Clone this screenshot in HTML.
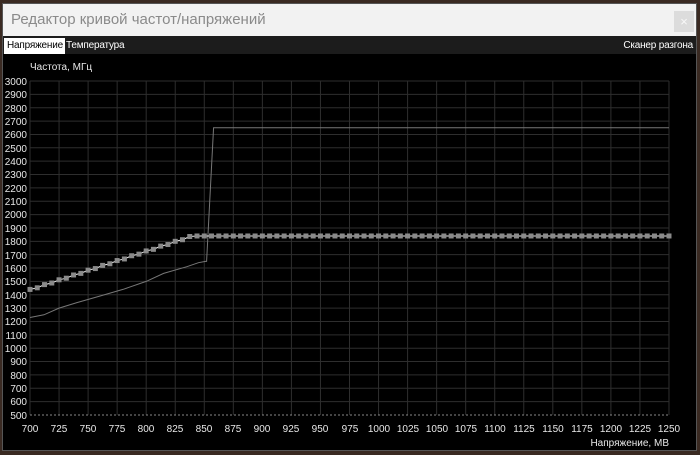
<!DOCTYPE html><html><head><meta charset="utf-8"><style>
body{margin:0;width:700px;height:455px;overflow:hidden;background:#3a2a22;font-family:"Liberation Sans",Arial,sans-serif;position:relative}
#win{position:absolute;left:2px;top:3px;width:695px;height:448px;background:#000;border:1px solid #555;box-sizing:border-box}
#tb{position:absolute;left:0;top:0;width:100%;height:32px;background:#f2f2f2}
#tt{position:absolute;left:8px;top:7px;font-size:15px;color:#8a8a8a}
#cl{position:absolute;right:2px;top:7px;width:20px;height:21px;background:#dcdcdc;color:#f8f8f8;font-size:13px;text-align:center;line-height:21px}
#tabs{position:absolute;left:0;top:32px;width:100%;height:18px;background:#1c1c1c;font-size:10px;color:#fff}
.tab{position:absolute;top:2px;height:16px;line-height:16px;letter-spacing:-0.2px}
svg{position:absolute;left:0;top:0}
svg text{font-family:"Liberation Sans",Arial,sans-serif;font-size:10px;fill:#e8e8e8}
</style></head><body>
<div id="win">
<div id="tb"><div id="tt">Редактор кривой частот/напряжений</div><div id="cl">×</div></div>
<div id="tabs"><div class="tab" style="left:1px;background:#fff;color:#000;padding:0 2px 0 3px">Напряжение</div><div class="tab" style="left:63px">Температура</div><div class="tab" style="right:3px">Сканер разгона</div></div>
</div>
<svg width="700" height="455" id="s">
<text x="30" y="70">Частота, МГц</text>
<g text-anchor="end">
<text x="27" y="85">3000</text><text x="27" y="98">2900</text><text x="27" y="112">2800</text><text x="27" y="125">2700</text><text x="27" y="138">2600</text><text x="27" y="152">2500</text><text x="27" y="165">2400</text><text x="27" y="178">2300</text><text x="27" y="192">2200</text><text x="27" y="205">2100</text><text x="27" y="218">2000</text><text x="27" y="232">1900</text><text x="27" y="245">1800</text><text x="27" y="259">1700</text><text x="27" y="272">1600</text><text x="27" y="285">1500</text><text x="27" y="299">1400</text><text x="27" y="312">1300</text><text x="27" y="325">1200</text><text x="27" y="339">1100</text><text x="27" y="352">1000</text><text x="27" y="365">900</text><text x="27" y="379">800</text><text x="27" y="392">700</text><text x="27" y="405">600</text><text x="27" y="419">500</text>
</g>
<g text-anchor="middle">
<text x="30" y="432">700</text><text x="59" y="432">725</text><text x="88" y="432">750</text><text x="117" y="432">775</text><text x="146" y="432">800</text><text x="175" y="432">825</text><text x="204" y="432">850</text><text x="233" y="432">875</text><text x="262" y="432">900</text><text x="291" y="432">925</text><text x="320" y="432">950</text><text x="350" y="432">975</text><text x="379" y="432">1000</text><text x="408" y="432">1025</text><text x="437" y="432">1050</text><text x="466" y="432">1075</text><text x="495" y="432">1100</text><text x="524" y="432">1125</text><text x="553" y="432">1150</text><text x="582" y="432">1175</text><text x="611" y="432">1200</text><text x="640" y="432">1225</text><text x="669" y="432">1250</text>
</g>
<text x="669" y="446" text-anchor="end">Напряжение, МВ</text>
<g id="g"></g>
</svg>
<script>
var g=document.getElementById('g'),h='';
function X(v){return 30+(v-700)*1.1618}function Y(f){return 81+(3000-f)*0.1336}
for(var f=600;f<=3000;f+=100){h+='<line x1="30" x2="669" y1="'+Y(f)+'" y2="'+Y(f)+'" stroke="#2e2e2e"/>'}
for(var v=700;v<=1250;v+=25){h+='<line x1="'+X(v)+'" x2="'+X(v)+'" y1="81" y2="415" stroke="#2e2e2e"/>'}
h+='<line x1="30" x2="669" y1="415" y2="415" stroke="#888" stroke-dasharray="2,2"/>';
var lp=[[700,1230],[712,1250],[725,1300],[740,1340],[760,1390],[780,1440],[800,1500],[815,1560],[835,1610],[845,1640],[851,1650],[852,1650],[858,2650],[1250,2650]];
h+='<polyline fill="none" stroke="#777" stroke-width="1" points="'+lp.map(function(p){return X(p[0])+','+Y(p[1])}).join(' ')+'"/>';
var up=[],sq='';
for(var v=700;v<=1250;v+=6.25){var f=v<840?1440+(v-700)*2.857:1840;f=Math.round(f/12)*12;if(v>=840)f=1840;up.push(X(v)+','+Y(f));sq+='<rect x="'+(X(v)-2.5)+'" y="'+(Y(f)-2.5)+'" width="5" height="5" fill="#8a8a8a"/>'}
h+='<polyline fill="none" stroke="#eee" stroke-width="1" points="'+up.join(' ')+'"/>'+sq;
g.innerHTML=h;
</script>
</body></html>
